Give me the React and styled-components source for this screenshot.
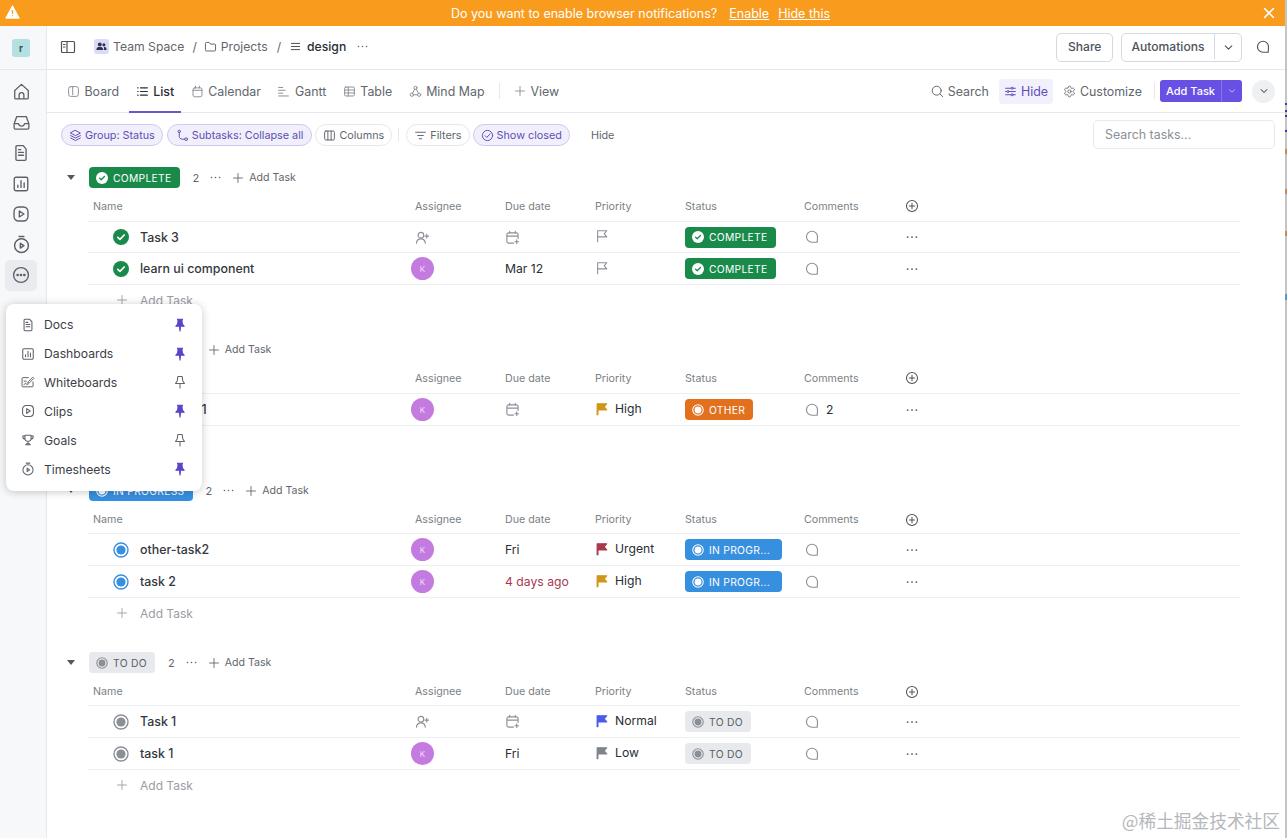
import React from "react";
import styled, { createGlobalStyle } from "styled-components";
import { Settings } from "lucide-react";

const Global = createGlobalStyle`
  html, body { margin: 0; padding: 0; height: 100%; background: #fff; }
  body { font-family: Inter, "Noto Sans", sans-serif; color: #2a2e34; overflow: hidden; }
  * { box-sizing: border-box; }
`;

const Page = styled.div`position: relative; width: 1287px; height: 838px; overflow: hidden; display: flex; flex-direction: column;`;
const Banner = styled.div`
  height: 26px; flex: none; background: #f99c1e; color: #fff; font-size: 12.5px; position: relative;
  display: flex; align-items: center; justify-content: center; gap: 12px; padding-right: 6px;
`;
const BannerWarn = styled.span`position: absolute; left: 5px; top: 5px; display: flex;`;
const BannerClose = styled.span`position: absolute; right: 11px; top: 6px; display: flex;`;
const BannerLink = styled.span`text-decoration: underline;`;
const BannerLinks = styled.span`display: flex; gap: 9px;`;
const Layout = styled.div`flex: 1; display: flex; min-height: 0;`;
const Sidebar = styled.aside`width: 47px; flex: none; background: #f7f8f9; border-right: 1px solid #e6e8eb; display: flex; flex-direction: column; align-items: center;`;
const SideTop = styled.div`height: 44px; width: 100%; flex: none; display: flex; align-items: center; justify-content: center; padding-right: 4px; border-bottom: 1px solid #e6e8eb;`;
const Workspace = styled.div`width: 18px; height: 18px; border-radius: 3px; background: #b4e0df; color: #2f4a55; font-size: 10px; font-weight: 600; display: flex; align-items: center; justify-content: center;`;
const SideList = styled.div`display: flex; flex-direction: column; align-items: center; padding-top: 6.5px; padding-right: 4px;`;
const SideBtn = styled.div`
  width: 32px; height: 30.6px; border-radius: 5px; display: flex; align-items: center; justify-content: center; color: #5c6169;
  background: ${p => (p.$active ? "#e9ebee" : "transparent")};
`;
const Main = styled.main`flex: 1; min-width: 0; display: flex; flex-direction: column;`;
const TopBar = styled.div`height: 44px; flex: none; border-bottom: 1px solid #e6e8eb; display: flex; align-items: center; padding: 0 12px 1px 13px;`;
const Crumbs = styled.div`display: flex; align-items: center; margin-left: 18px; padding-bottom: 2px; font-size: 12.2px; color: #62666d; flex: 1;`;
const Crumb = styled.span`display: flex; align-items: center; gap: ${p => (p.$strong ? 6 : 4)}px; color: ${p => (p.$strong ? "#2a2e34" : "#62666d")}; font-weight: ${p => (p.$strong ? 500 : 400)};`;
const Sep = styled.span`margin: 0 ${p => (p.$tight ? "7px" : "9px")} 0 ${p => (p.$tight ? "8px" : "9px")}; color: #62666d;`;
const SpaceBadge = styled.span`width: 15px; height: 15px; border-radius: 3px; background: #d9dcf7; display: flex; align-items: center; justify-content: center; color: #33344f;`;
const More = styled.span`display: flex; margin-left: 10px; color: #62666d;`;
const OutlineBtn = styled.div`height: 29px; border: 1px solid #d6d9dd; border-radius: 5px; display: flex; align-items: center; font-size: 12.1px; font-weight: 500; color: #4f535a; padding: 0 10.5px 2px; background: #fff;`;
const SplitPart = styled.span`display: flex; align-items: center; height: 100%; padding: ${p => (p.$icon ? "2px 6.5px 0" : "0 9.5px")}; border-left: ${p => (p.$icon ? "1px solid #d6d9dd" : "none")};`;
const SplitBtn = styled(OutlineBtn)`padding: 0 0 2px; margin-left: 8px;`;
const TopIcon = styled.span`display: flex; margin-left: 14px; margin-right: 5px; color: #4f535a;`;
const Tabs = styled.div`height: 43px; flex: none; border-bottom: 1px solid #e6e8eb; display: flex; align-items: center; padding-left: 13px; padding-right: 12px;`;
const Tab = styled.div`
  position: relative; height: 100%; display: flex; align-items: center; gap: 4.5px; padding: 0 7px; margin-right: 2.5px; font-size: 12.4px;
  color: ${p => (p.$active ? "#2a2e34" : "#62666d")}; font-weight: ${p => (p.$active ? 500 : 400)};
  ${p => p.$active && `&::after { content: ""; position: absolute; left: 0; right: 0; bottom: -1px; height: 2px; background: #6a57c9; }`}
`;
const VDiv = styled.span`width: 1px; height: 16px; background: #e6e8eb; margin: ${p => (p.$flush ? "0" : "0 7px 0 5px")};`;
const TabRight = styled.div`margin-left: auto; display: flex; align-items: center; font-size: 12.4px; color: #62666d;`;
const ToolBtn = styled.div`
  display: flex; align-items: center; gap: 4px; height: 25px; padding: 0 ${p => (p.$on ? "5px" : "0")}; border-radius: 4px; margin-right: ${p => p.$mr || 10}px;
  background: ${p => (p.$on ? "#f2f0fc" : "transparent")}; color: ${p => (p.$on ? "#5c4fb5" : "#62666d")};
`;
const AddBtn = styled.div`height: 22px; width: 82px; border-radius: 3px; background: #6750e3; color: #fff; display: flex; align-items: center; font-size: 11px; font-weight: 500; margin-left: 5px;`;
const AddLabel = styled.span`width: 62px; text-align: center; border-right: 1px solid #8473ea; line-height: 22px;`;
const AddCaret = styled.span`flex: 1; display: flex; align-items: center; justify-content: center; color: #d5cffa;`;
const RoundBtn = styled.span`width: 23px; height: 23px; border-radius: 50%; background: #eff0f2; margin-left: 10px; display: flex; align-items: center; justify-content: center; color: #4f535a;`;
const Filters = styled.div`height: 44px; flex: none; display: flex; align-items: center; padding: 0 12px 0 14px; gap: 4px;`;
const Pill = styled.div`
  height: 22px; display: flex; align-items: center; gap: 3px; padding: 0 ${p => (p.$wide ? 8 : 7)}px; border-radius: 11px; font-size: 10.8px; white-space: nowrap;
  margin-left: ${p => (p.$pull ? "-1px" : "0")};
  border: 1px solid ${p => (p.$on ? "#cfc9f0" : "#e6e8eb")}; background: ${p => (p.$on ? "#f1effb" : "#fff")}; color: ${p => (p.$on ? "#5c4fb5" : "#62666d")};
`;
const FilterDiv = styled.span`width: 1px; height: 14px; background: #e6e8eb; margin: 0 3px 0 2px;`;
const HideText = styled.span`font-size: 10.8px; color: #62666d; margin-left: 17px;`;
const SearchBox = styled.div`margin: 0 0 2px auto; width: 182px; height: 29px; border: 1px solid #e8eaed; border-radius: 5px; display: flex; align-items: center; padding-left: 11px; font-size: 12.4px; color: #8b8f96;`;
const Groups = styled.div`padding: 10px 0 0 41px; width: 1193px; display: flex; flex-direction: column;`;
const Group = styled.section`margin-bottom: 24px;`;
const GroupHead = styled.div`height: 21px; display: flex; align-items: center; position: relative; padding-left: 1px;`;
const Caret = styled.span`position: absolute; left: -21px; top: 8px; width: 0; height: 0; border-left: 4px solid transparent; border-right: 4px solid transparent; border-top: 5px solid #53575e;`;
const Badge = styled.span`
  display: inline-flex; align-items: center; gap: 5px; height: 21px; padding: 0 8px 0 7px; border-radius: 4px; font-size: 10.3px; letter-spacing: .3px; white-space: nowrap;
  font-weight: 400; background: ${p => p.$bg}; color: ${p => p.$fg};
  ${p => p.$w && `width: ${p.$w}px;`}
`;
const Count = styled.span`font-size: 11px; color: #62666d; margin-left: 13px;`;
const HeadDots = styled.span`display: flex; margin: 0 4px 0 10px; color: #62666d;`;
const HeadAdd = styled.span`display: flex; align-items: center; gap: 5px; font-size: 10.6px; color: #62666d; margin-left: 6px;`;
const Grid = styled.div`
  display: grid; grid-template-columns: 327px 90px 90px 90px 119px 101px 14px; align-items: center; border-bottom: 1px solid #eceef0; font-size: 12.2px;
`;
const ColHead = styled(Grid)`height: ${p => p.$h}px; font-size: 10.7px; color: #7b7f86; padding-top: ${p => p.$pt}px;`;
const Row = styled(Grid)`height: ${p => (p.$h || 32)}px; color: #2a2e34;`;
const NameHead = styled.span`padding-left: 5px;`;
const NameCell = styled.span`display: flex; align-items: center; gap: 11px; padding-left: 25px; font-size: 12.4px; font-weight: 450; color: #34383e;`;
const Avatar = styled.span`width: 23px; height: 23px; border-radius: 50%; background: #c37be0; color: #f3dcfb; font-size: 8px; display: flex; align-items: center; justify-content: center; margin-left: -4px;`;
const GreyIcon = styled.span`display: flex; color: ${p => (p.$dark ? "#4f535a" : "#8b8f96")};`;
const PriorityCell = styled.span`display: flex; align-items: center; gap: 6px; padding-bottom: 2px;`;
const Due = styled.span`color: ${p => (p.$late ? "#a83a52" : "#2a2e34")};`;
const CommentCell = styled.span`display: flex; align-items: center; gap: 7px; padding-left: 1px;`;
const AddRow = styled.div`height: 30px; display: flex; align-items: center; gap: 12px; padding-left: 28px; font-size: 12px; color: #9a9da3;`;
const Menu = styled.div`position: absolute; left: 6px; top: 304px; width: 196px; height: 187px; background: #fff; border-radius: 8px; box-shadow: 0 1px 8px rgba(0,0,0,.22); padding: 6.2px 0; display: flex; flex-direction: column;`;
const MenuItem = styled.div`height: 28.9px; flex: none; display: flex; align-items: center; padding-left: 15px; padding-right: 15px; font-size: 12.2px; color: #3c4047; gap: 9px;`;
const MenuIcon = styled.span`display: flex; color: #5c6169;`;
const MenuPin = styled.span`display: flex; margin-left: auto; color: ${p => (p.$on ? "#5a45c9" : "#62666d")};`;
const Watermark = styled.div`position: absolute; right: 7px; bottom: 5px; font-family: "Noto Sans CJK SC", sans-serif; font-size: 17.7px; color: #b4b7bb; white-space: nowrap;`;
const EdgeLine = styled.div`position: absolute; right: 0; top: 0; bottom: 0; width: 2px; background: #c4c4c4;`;
const EdgeTick = styled.div`position: absolute; right: 0; top: ${p => p.$top}px; width: 2px; height: ${p => p.$h}px; background: ${p => p.$c};`;

const Ico = ({ s = 14, sw = 1.2, fill = "none", children, vb = 16 }) => (
  <svg width={s} height={s} viewBox={`0 0 ${vb} ${vb}`} fill={fill} stroke={fill === "none" ? "currentColor" : "none"} strokeWidth={sw} strokeLinecap="round" strokeLinejoin="round">{children}</svg>
);

const Dots = ({ s = 14 }) => <Ico s={s} fill="currentColor"><circle cx="3" cy="8" r="1" /><circle cx="8" cy="8" r="1" /><circle cx="13" cy="8" r="1" /></Ico>;
const Plus = ({ s = 12 }) => <Ico s={s}><path d="M8 2v12M2 8h12" /></Ico>;
const Chevron = ({ s = 12 }) => <Ico s={s} sw={1.4}><path d="M4 6l4 4 4-4" /></Ico>;
const Bubble = ({ s = 14 }) => <Ico s={s} sw={1.3}><path d="M14 14 H8 A6.3 6.3 0 1 1 14.3 7.7 c0 2.3 -.3 4 -.3 6.3z" /></Ico>;
const Flag = ({ color, s = 14 }) => color
  ? <Ico s={s}><path d="M3 2h10.5l-3 3.5 3 3.5H3.4v5.5H2.4V2z" fill={color} stroke={color} /></Ico>
  : <Ico s={s}><path d="M3 14.5V2h10.5l-3 3.5 3 3.5H3" /></Ico>;
const Doc = ({ s = 14 }) => <Ico s={s}><path d="M3.5 2.5a1 1 0 0 1 1-1H10l2.5 3v9a1 1 0 0 1-1 1h-7a1 1 0 0 1-1-1zM5.8 7.5h4.4M5.8 10h4.4M5.8 5h2" /></Ico>;
const Chart = ({ s = 14 }) => <Ico s={s}><rect x="2" y="2" width="12" height="12" rx="1.5" /><path d="M5.2 11V9M8 11V5M10.8 11V7" /></Ico>;
const Clip = ({ s = 14 }) => <Ico s={s}><rect x="1.8" y="1.8" width="12.4" height="12.4" rx="4" /><path d="M6.5 5.3v5.4L10.6 8z" /></Ico>;
const Timer = ({ s = 14 }) => <Ico s={s}><circle cx="8" cy="9" r="5.8" /><path d="M6 1.3h4M7 7v4l3-2z" /></Ico>;
const Whiteboard = ({ s = 15 }) => <Ico s={s} sw={1.1}><path d="M8.5 3H2.2a1 1 0 0 0-1 1v8.500a1 1 0 0 0 1 1h10.600a1 1 0 0 0 1-1V8M3.500 7h2.500M3.500 11c.8-1.500 1.600-2 2.200-1.500s0 1.500.8 1.500 1-.8 1.800-.8M8.500 7.500l5-5 1.300 1.300-5 5-1.800.5z" /></Ico>;
const Trophy = ({ s = 14 }) => <Ico s={s}><path d="M4.5 2.5h7v3.5a3.5 3.5 0 0 1-7 0zM4.5 3.5H2c0 2.5 1 3.5 2.7 3.7M11.5 3.500H14c0 2.500-1 3.500-2.700 3.700M8 9.500v2.500M5.500 13.500c0-1 1-1.500 2.500-1.500s2.500.5 2.500 1.500z" /></Ico>;
const Pin = ({ on }) => on
  ? <Ico s={14} vb={16}><path d="M5 1.500h6L10.200 3l.6 4 2 2.500H8.600L8 15l-.6-5.500H3.200l2-2.500.6-4z" fill="currentColor" stroke="currentColor" /></Ico>
  : <Ico s={14} vb={16}><path d="M5.500 1.800h5l.6 4.700 2 3.200H2.900l2-3.200zM8 9.700V14.800" /></Ico>;

const CheckStatus = ({ s = 12, bg = "#fff", fg = "#1a8a4a" }) => (
  <svg width={s} height={s} viewBox="0 0 16 16"><circle cx="8" cy="8" r="8" fill={bg} /><path d="M4.800 8.300l2.200 2.100 4.200-4.400" stroke={fg} strokeWidth="1.700" fill="none" strokeLinecap="round" strokeLinejoin="round" /></svg>
);
const DotStatus = ({ s = 12, color = "#fff", inner }) => (
  <svg width={s} height={s} viewBox="0 0 16 16"><circle cx="8" cy="8" r="7" fill="none" stroke={color} strokeWidth="1.400" /><circle cx="8" cy="8" r="4.600" fill={inner || color} /></svg>
);

const STATUS = {
  complete: { label: "COMPLETE", bg: "#1a8a4a", fg: "#fff", icon: <CheckStatus />, task: <CheckStatus s={16} bg="#1a8a4a" fg="#fff" /> },
  other: { label: "OTHER", bg: "#e2701c", fg: "#fff", icon: <DotStatus />, task: <DotStatus s={16} color="#e2701c" /> },
  progress: { label: "IN PROGRESS", short: "IN PROGR...", w: 97, bg: "#378fe0", fg: "#fff", icon: <DotStatus />, task: <DotStatus s={16} color="#378fe0" /> },
  todo: { label: "TO DO", bg: "#e7e9ec", fg: "#5a5e65", icon: <DotStatus color="#8b8f96" />, task: <DotStatus s={16} color="#8b8f96" /> },
};

const PRIORITY = { Urgent: "#a93a4c", High: "#d0961c", Normal: "#4a5ce8", Low: "#7f848b" };

const GROUPS = [
  { key: "complete", count: 2, colH: 34, colPt: 3, tasks: [
    { name: "Task 3", h: 31 },
    { name: "learn ui component", avatar: true, due: "Mar 12" },
  ] },
  { key: "other", count: 1, colH: 34, colPt: 3, tasks: [
    { name: "other-task1", avatar: true, priority: "High", comments: 2 },
  ] },
  { key: "progress", count: 2, colH: 33, colPt: 5, tasks: [
    { name: "other-task2", avatar: true, due: "Fri", priority: "Urgent" },
    { name: "task 2", avatar: true, due: "4 days ago", late: true, priority: "High" },
  ] },
  { key: "todo", count: 2, colH: 33, colPt: 5, tasks: [
    { name: "Task 1", priority: "Normal" },
    { name: "task 1", avatar: true, due: "Fri", priority: "Low" },
  ] },
];

const MENU = [
  ["Docs", <Doc />, true],
  ["Dashboards", <Chart />, true],
  ["Whiteboards", <Whiteboard s={14} />, false],
  ["Clips", <Clip />, true],
  ["Goals", <Trophy />, false],
  ["Timesheets", <Timer />, true],
];

const SIDE = [
  <Ico s={19} sw={1.1}><path d="M2.300 7.200 8 2l5.700 5.200v6a1 1 0 0 1-1 1H3.300a1 1 0 0 1-1-1zM6 14.200V11a2 2 0 0 1 4 0v3.200" /></Ico>,
  <Ico s={19} sw={1.1}><path d="M1.800 9 4 3h8l2.200 6v3.500a1 1 0 0 1-1 1H2.800a1 1 0 0 1-1-1zM1.800 9h3.600c.3 1.300 1.200 2 2.600 2s2.300-.7 2.600-2h3.600" /></Ico>,
  <Doc s={18} />,
  <Chart s={18} />,
  <Clip s={18} />,
  <Timer s={19} />,
  <Ico s={18}><circle cx="8" cy="8" r="6.600" /><circle cx="5" cy="8" r=".6" fill="currentColor" /><circle cx="8" cy="8" r=".6" fill="currentColor" /><circle cx="11" cy="8" r=".6" fill="currentColor" /></Ico>,
];

const TICKS = [
  { top: 103, h: 2, c: "#3a3aa8" },
  { top: 110, h: 2, c: "#3a3aa8" },
  { top: 115, h: 2, c: "#3a3aa8" },
  { top: 130, h: 2, c: "#3a3aa8" },
  { top: 149, h: 5, c: "#c9875a" },
  { top: 189, h: 5, c: "#c9875a" },
  { top: 231, h: 5, c: "#c9875a" },
  { top: 294, h: 6, c: "#4e9bd6" },
];

const TabIcons = {
  board: <Ico s={13}><rect x="2" y="2" width="12" height="12" rx="2.500" /><path d="M7 2v10" /></Ico>,
  list: <Ico s={13} sw={1.400}><path d="M5.500 3.500H14M5.500 8H14M5.500 12.500H14M2 3.500h.6M2 8h.6M2 12.500h.6" /></Ico>,
  calendar: <Ico s={13}><rect x="2.500" y="3.500" width="11" height="11" rx="2" /><path d="M2.500 6.500h11M5.500 1.500v2M10.500 1.500v2" /></Ico>,
  gantt: <Ico s={13}><path d="M2 3h5M2 6.500h8M2 10h5M2 13.500h12" /></Ico>,
  table: <Ico s={13}><rect x="2" y="2.500" width="12" height="11" rx="1.500" /><path d="M2 6.200h12M2 9.800h12M6.500 2.500v11" /></Ico>,
  mind: <Ico s={13}><circle cx="8" cy="3.500" r="2" /><circle cx="3.500" cy="12" r="2" /><circle cx="12.500" cy="12" r="2" /><path d="M7 5.200 4.400 10.200M9 5.200l2.600 5M5.500 12h5" /></Ico>,
};

const TaskRow = ({ t, st }) => (
  <Row $h={t.h}>
    <NameCell>{st.task}{t.name}</NameCell>
    {t.avatar ? <Avatar>K</Avatar> : <GreyIcon><Ico s={15}><circle cx="6.300" cy="5.500" r="3" /><path d="M1.500 14c.3-3 2.300-4.600 4.800-4.600S10.800 11 11 14M12.500 4.500v4M10.500 6.500h4" /></Ico></GreyIcon>}
    {t.due ? <Due $late={t.late}>{t.due}</Due> : <GreyIcon><Ico s={15}><path d="M14 9V5a2 2 0 0 0-2-2H4a2 2 0 0 0-2 2v7a2 2 0 0 0 2 2h5M2 6.500h12M5 1.500v2M11 1.500v2M12.500 10.500v4M10.500 12.500h4" /></Ico></GreyIcon>}
    <PriorityCell>
      {t.priority ? <Flag color={PRIORITY[t.priority]} /> : <GreyIcon><Flag /></GreyIcon>}
      {t.priority}
    </PriorityCell>
    <span><Badge $bg={st.bg} $fg={st.fg} $w={st.w}>{st.icon}{st.short || st.label}</Badge></span>
    <CommentCell><GreyIcon><Bubble /></GreyIcon>{t.comments}</CommentCell>
    <GreyIcon $dark><Dots /></GreyIcon>
  </Row>
);

export default function App() {
  return (
    <Page>
      <Global />
      <Banner>
        <BannerWarn>
          <svg width="15" height="14" viewBox="0 0 16 15"><path d="M8 1 15 14H1z" fill="#fff" stroke="#fff" strokeWidth="1.200" strokeLinejoin="round" /><path d="M8 5.500v4M8 11v1" stroke="#f99c1e" strokeWidth="1.500" /></svg>
        </BannerWarn>
        <span>Do you want to enable browser notifications?</span>
        <BannerLinks><BannerLink>Enable</BannerLink><BannerLink>Hide this</BannerLink></BannerLinks>
        <BannerClose><Ico s={14} sw={1.800}><path d="M3 3l10 10M13 3 3 13" /></Ico></BannerClose>
      </Banner>
      <Layout>
        <Sidebar>
          <SideTop><Workspace>r</Workspace></SideTop>
          <SideList>
            {SIDE.map((ic, i) => <SideBtn key={i} $active={i === 6}>{ic}</SideBtn>)}
          </SideList>
        </Sidebar>
        <Main>
          <TopBar>
            <GreyIcon $dark><Ico s={16}><rect x="1.500" y="2.500" width="13" height="11" rx="1" /><path d="M7 2.500v11M3.500 5.500h1.500M3.500 8h1.500" /></Ico></GreyIcon>
            <Crumbs>
              <Crumb><SpaceBadge><Ico s={11} fill="currentColor"><circle cx="5.500" cy="5" r="2.800" /><circle cx="11.500" cy="5.500" r="2.300" /><path d="M.5 13c.2-3 2-4.500 5-4.500s4.800 1.500 5 4.500zM11.500 8.500c2.500 0 3.800 1.500 4 4.500h-4z" /></Ico></SpaceBadge>Team Space</Crumb>
              <Sep $tight>/</Sep>
              <Crumb><Ico s={13}><path d="M1.800 4a1 1 0 0 1 1-1h3.500l1.500 2h5.400a1 1 0 0 1 1 1v6.500a1 1 0 0 1-1 1H2.800a1 1 0 0 1-1-1z" /></Ico>Projects</Crumb>
              <Sep>/</Sep>
              <Crumb $strong><Ico s={11}><path d="M2 3.500h12M2 8h12M2 12.500h12" /></Ico>design</Crumb>
              <More><Dots s={13} /></More>
            </Crumbs>
            <OutlineBtn>Share</OutlineBtn>
            <SplitBtn><SplitPart>Automations</SplitPart><SplitPart $icon><Chevron s={13} /></SplitPart></SplitBtn>
            <TopIcon><Bubble s={14} /></TopIcon>
          </TopBar>
          <Tabs>
            <Tab><GreyIcon>{TabIcons.board}</GreyIcon>Board</Tab>
            <Tab $active>{TabIcons.list}List</Tab>
            <Tab><GreyIcon>{TabIcons.calendar}</GreyIcon>Calendar</Tab>
            <Tab><GreyIcon>{TabIcons.gantt}</GreyIcon>Gantt</Tab>
            <Tab><GreyIcon>{TabIcons.table}</GreyIcon>Table</Tab>
            <Tab><GreyIcon>{TabIcons.mind}</GreyIcon>Mind Map</Tab>
            <VDiv />
            <Tab><GreyIcon><Plus /></GreyIcon>View</Tab>
            <TabRight>
              <ToolBtn><Ico s={13}><circle cx="7" cy="7" r="5.500" /><path d="M11 11l3.500 3.500" /></Ico>Search</ToolBtn>
              <ToolBtn $on><Ico s={13}><path d="M2 4h12M2 8h12M2 12h12" /><circle cx="10" cy="4" r="1.300" fill="#fff" /><circle cx="5" cy="8" r="1.300" fill="#fff" /><circle cx="10" cy="12" r="1.300" fill="#fff" /></Ico>Hide</ToolBtn>
              <ToolBtn $mr={12}><Settings size={13} strokeWidth={1.6} />Customize</ToolBtn>
              <VDiv $flush />
              <AddBtn><AddLabel>Add Task</AddLabel><AddCaret><Chevron s={10} /></AddCaret></AddBtn>
              <RoundBtn><Chevron s={12} /></RoundBtn>
            </TabRight>
          </Tabs>
          <Filters>
            <Pill $on><Ico s={13}><path d="M8 1.800 14 5 8 8.200 2 5zM2 8l6 3.200L14 8M2 11l6 3.200 6-3.200" /></Ico>Group: Status</Pill>
            <Pill $on $wide><Ico s={13}><circle cx="12.500" cy="12.500" r="1.700" /><circle cx="4" cy="3" r="1.500" /><path d="M4 4.500V9c0 2 1.500 3.500 3.500 3.500h3.300" /></Ico>Subtasks: Collapse all</Pill>
            <Pill $pull><Ico s={13}><rect x="2" y="2.500" width="12" height="11" rx="1.500" /><path d="M6 2.500v11M10 2.500v11" /></Ico>Columns</Pill>
            <FilterDiv />
            <Pill><Ico s={13}><path d="M2 4h12M4.500 8h7M6.500 12h3" /></Ico>Filters</Pill>
            <Pill $on $pull><Ico s={13}><circle cx="8" cy="8" r="6.300" /><path d="M5 8.200l2.200 2.200L11.200 6" /></Ico>Show closed</Pill>
            <HideText>Hide</HideText>
            <SearchBox>Search tasks...</SearchBox>
          </Filters>
          <Groups>
            {GROUPS.map((g) => {
              const st = STATUS[g.key];
              return (
                <Group key={g.key}>
                  <GroupHead>
                    <Caret />
                    <Badge $bg={st.bg} $fg={st.fg}>{st.icon}{st.label}</Badge>
                    <Count>{g.count}</Count>
                    <HeadDots><Dots s={13} /></HeadDots>
                    <HeadAdd><Plus s={12} />Add Task</HeadAdd>
                  </GroupHead>
                  <ColHead $h={g.colH} $pt={g.colPt}>
                    <NameHead>Name</NameHead><span>Assignee</span><span>Due date</span><span>Priority</span><span>Status</span><span>Comments</span>
                    <GreyIcon $dark><Ico s={14}><circle cx="8" cy="8" r="6.300" /><path d="M8 5v6M5 8h6" /></Ico></GreyIcon>
                  </ColHead>
                  {g.tasks.map((t) => <TaskRow key={t.name} t={t} st={st} />)}
                  <AddRow><Plus s={12} />Add Task</AddRow>
                </Group>
              );
            })}
          </Groups>
        </Main>
      </Layout>
      <Menu>
        {MENU.map(([name, icon, on]) => (
          <MenuItem key={name}>
            <MenuIcon>{icon}</MenuIcon>{name}
            <MenuPin $on={on}><Pin on={on} /></MenuPin>
          </MenuItem>
        ))}
      </Menu>
      <EdgeLine />
      {TICKS.map((t) => <EdgeTick key={t.top} $top={t.top} $h={t.h} $c={t.c} />)}
      <Watermark>@稀土掘金技术社区</Watermark>
    </Page>
  );
}
